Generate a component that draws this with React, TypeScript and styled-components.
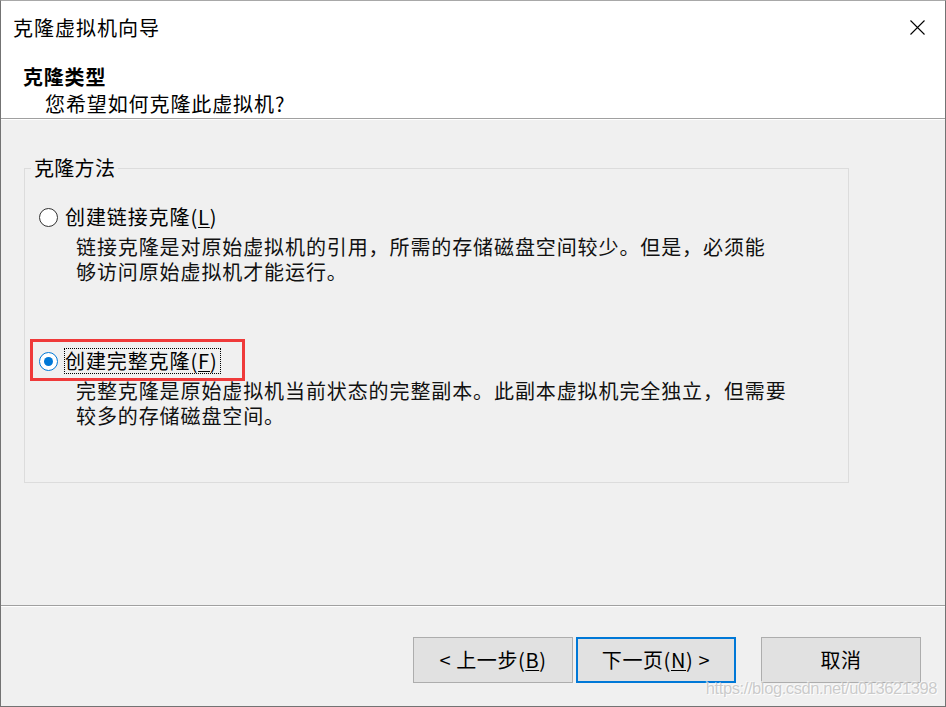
import React from "react";
import styled, { createGlobalStyle } from "styled-components";

const GlobalStyle = createGlobalStyle`
  html, body {
    margin: 0;
    padding: 0;
    background: #ffffff;
  }
  body {
    font-family: "Noto Sans CJK SC", "Noto Sans", sans-serif;
    color: #000;
  }
  * { box-sizing: border-box; }
`;

const Window = styled.div`
  position: relative;
  width: 946px;
  height: 707px;
  border: 1px solid #737373;
  border-top-color: #a8a8a8;
  display: flex;
  flex-direction: column;
  background: #f0f0f0;
  overflow: hidden;
`;

const TitleBar = styled.div`
  height: 53px;
  flex: none;
  display: flex;
  align-items: center;
  justify-content: space-between;
  background: #ffffff;
  padding-left: 12px;
`;

const TitleText = styled.span`
  font-size: 20px;
  letter-spacing: 1px;
  line-height: 26px;
`;

const CloseButton = styled.div`
  width: 15px;
  height: 15px;
  margin-right: 20px;
  display: flex;
`;

const Header = styled.div`
  flex: none;
  height: 65px;
  background: #ffffff;
  padding: 10px 0 0 22px;
  border-bottom: 1px solid #a0a0a0;
`;

const HeaderTitle = styled.div`
  font-size: 20px;
  font-weight: 700;
  letter-spacing: 0.8px;
  line-height: 26px;
`;

const HeaderSubtitle = styled.div`
  font-size: 20px;
  letter-spacing: 0.9px;
  line-height: 28px;
  padding-left: 22px;
`;

const Body = styled.div`
  flex: 1;
  border-top: 1px solid #ffffff;
  padding: 48px 0 0 23px;
`;

const GroupBox = styled.div`
  width: 825px;
  height: 315px;
  border: 1px solid #dcdcdc;
`;

const Legend = styled.div`
  width: fit-content;
  margin: -13px 0 0 6px;
  padding: 0 3px;
  background: #f0f0f0;
  font-size: 20px;
  letter-spacing: 0.3px;
  line-height: 24px;
`;

const Options = styled.div`
  display: flex;
  flex-direction: column;
  padding: 23px 14px 0;
`;

const Option = styled.div<{ $gap?: number }>`
  margin-top: ${(p) => p.$gap ?? 0}px;
`;

const OptionRow = styled.div`
  position: relative;
  display: flex;
  align-items: center;
  gap: 7px;
  height: 28px;
`;

const Radio = styled.span<{ $checked?: boolean }>`
  flex: none;
  width: 19px;
  height: 19px;
  border-radius: 50%;
  background: #ffffff;
  border: 1px solid ${(p) => (p.$checked ? "#0078d7" : "#333333")};
  display: flex;
  align-items: center;
  justify-content: center;
  &::after {
    content: "";
    display: ${(p) => (p.$checked ? "block" : "none")};
    width: 9px;
    height: 9px;
    border-radius: 50%;
    background: #0078d7;
  }
`;

const OptionLabel = styled.span<{ $focused?: boolean }>`
  font-size: 20px;
  letter-spacing: 0.9px;
  line-height: 24px;
  border: 1px dotted ${(p) => (p.$focused ? "#000" : "transparent")};
  margin-left: -1px;
  padding-right: 2px;
`;

const Key = styled.span`
  text-decoration: underline;
  text-underline-offset: 2px;
  text-decoration-thickness: 1px;
`;

const Description = styled.div`
  margin: 3px 0 0 37px;
  font-size: 20px;
  letter-spacing: 0.9px;
  line-height: 25px;
  color: #111;
`;

const Highlight = styled.span`
  position: absolute;
  left: -9px;
  top: -8px;
  width: 215px;
  height: 42px;
  border: 3px solid #ef3a3a;
  pointer-events: none;
`;

const Footer = styled.div`
  flex: none;
  height: 101px;
  border-top: 1px solid #a0a0a0;
  box-shadow: inset 0 1px 0 #ffffff;
  display: flex;
  justify-content: flex-end;
  align-items: flex-start;
  padding: 31px 24px 0 0;
`;

const Button = styled.button<{ $focused?: boolean; $space?: number }>`
  width: 160px;
  height: 46px;
  margin-left: ${(p) => p.$space ?? 0}px;
  background: #e1e1e1;
  border: ${(p) => (p.$focused ? "2px solid #0078d7" : "1px solid #adadad")};
  font-family: "Noto Sans CJK SC", "Noto Sans", sans-serif;
  font-size: 20px;
  letter-spacing: 0.6px;
  color: #000;
  padding: 0;
  line-height: 24px;
`;

const Watermark = styled.span`
  position: absolute;
  right: 8px;
  bottom: 8px;
  font-family: "Liberation Sans", Arial, sans-serif;
  font-size: 16.5px;
  letter-spacing: -0.4px;
  color: rgba(200, 200, 200, 0.95);
  text-shadow: 1px 1px 0 rgba(255, 255, 255, 0.9), -1px -1px 0 rgba(255, 255, 255, 0.6);
  pointer-events: none;
`;

export default function App() {
  return (
    <>
      <GlobalStyle />
      <Window>
        <TitleBar>
          <TitleText>克隆虚拟机向导</TitleText>
          <CloseButton>
            <svg width="15" height="15" viewBox="0 0 15 15">
              <path d="M0.5 0.5 L14.5 14.5 M14.5 0.5 L0.5 14.5" stroke="#000" strokeWidth="1.1" fill="none" />
            </svg>
          </CloseButton>
        </TitleBar>
        <Header>
          <HeaderTitle>克隆类型</HeaderTitle>
          <HeaderSubtitle>您希望如何克隆此虚拟机?</HeaderSubtitle>
        </Header>
        <Body>
          <GroupBox>
            <Legend>克隆方法</Legend>
            <Options>
              <Option>
                <OptionRow>
                  <Radio />
                  <OptionLabel>
                    创建链接克隆(<Key>L</Key>)
                  </OptionLabel>
                </OptionRow>
                <Description>
                  链接克隆是对原始虚拟机的引用，所需的存储磁盘空间较少。但是，必须能
                  <br />
                  够访问原始虚拟机才能运行。
                </Description>
              </Option>
              <Option $gap={63}>
                <OptionRow>
                  <Radio $checked />
                  <OptionLabel $focused>
                    创建完整克隆(<Key>F</Key>)
                  </OptionLabel>
                  <Highlight />
                </OptionRow>
                <Description>
                  完整克隆是原始虚拟机当前状态的完整副本。此副本虚拟机完全独立，但需要
                  <br />
                  较多的存储磁盘空间。
                </Description>
              </Option>
            </Options>
          </GroupBox>
        </Body>
        <Footer>
          <Button>
            &lt; 上一步(<Key>B</Key>)
          </Button>
          <Button $focused $space={3}>
            下一页(<Key>N</Key>) &gt;
          </Button>
          <Button $space={25}>取消</Button>
        </Footer>
        <Watermark>https://blog.csdn.net/u013621398</Watermark>
      </Window>
    </>
  );
}
